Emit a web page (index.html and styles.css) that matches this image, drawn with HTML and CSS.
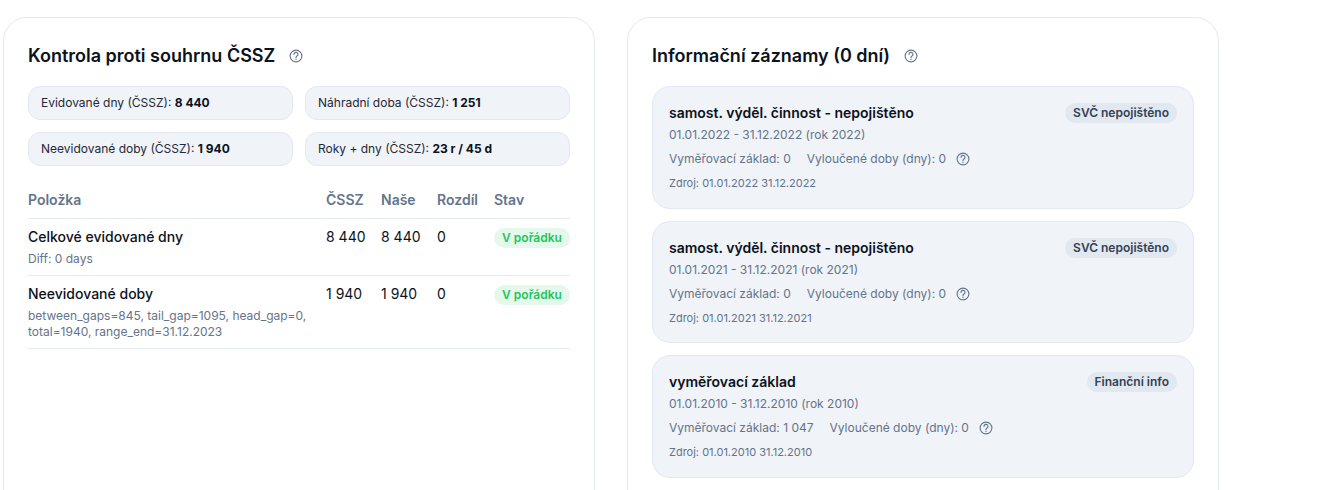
FILE: index.html
```html
<!DOCTYPE html>
<html lang="cs">
<head>
<meta charset="utf-8">
<title>Kontrola</title>
<link rel="stylesheet" href="styles.css">
</head>
<body>
<svg class="defs" width="0" height="0" aria-hidden="true"><symbol id="help" viewBox="0 0 14 14"><circle cx="7" cy="7" r="5.9" fill="none" stroke="currentColor" stroke-width="1.1"/><path d="M5 5.4a2 2 0 1 1 3 1.7c-.7.4-1 .7-1 1.4" fill="none" stroke="currentColor" stroke-width="1.1" stroke-linecap="round"/><circle cx="7" cy="10.3" r=".7" fill="currentColor"/></symbol></svg>
<main class="page">
  <section class="card">
    <h2 class="card-title">Kontrola proti souhrnu ČSSZ <svg class="help"><use href="#help"/></svg></h2>
    <div class="stats">
      <div class="stat">Evidované dny (ČSSZ): <b>8 440</b></div>
      <div class="stat">Náhradní doba (ČSSZ): <b>1 251</b></div>
      <div class="stat">Neevidované doby (ČSSZ): <b>1 940</b></div>
      <div class="stat">Roky + dny (ČSSZ): <b>23 r / 45 d</b></div>
    </div>
    <table class="table">
      <thead>
        <tr><th class="c1">Položka</th><th class="c2">ČSSZ</th><th class="c3">Naše</th><th class="c4">Rozdíl</th><th>Stav</th></tr>
      </thead>
      <tbody>
        <tr>
          <td><div class="item">Celkové evidované dny</div><div class="note">Diff: 0 days</div></td>
          <td>8 440</td><td>8 440</td><td>0</td><td><span class="ok">V pořádku</span></td>
        </tr>
        <tr>
          <td><div class="item">Neevidované doby</div><div class="note">between_gaps=845, tail_gap=1095, head_gap=0, total=1940, range_end=31.12.2023</div></td>
          <td>1 940</td><td>1 940</td><td>0</td><td><span class="ok">V pořádku</span></td>
        </tr>
      </tbody>
    </table>
  </section>
  <section class="card">
    <h2 class="card-title">Informační záznamy (0 dní) <svg class="help"><use href="#help"/></svg></h2>
    <div class="records">
      <article class="record">
        <div class="rec-head"><div class="rec-title">samost. výděl. činnost - nepojištěno</div><span class="tag">SVČ nepojištěno</span></div>
        <div class="rec-date">01.01.2022 - 31.12.2022 (rok 2022)</div>
        <div class="rec-meta"><span>Vyměřovací základ: 0</span><span>Vyloučené doby (dny): 0</span><svg class="help-sm"><use href="#help"/></svg></div>
        <div class="rec-src">Zdroj: 01.01.2022 31.12.2022</div>
      </article>
      <article class="record">
        <div class="rec-head"><div class="rec-title">samost. výděl. činnost - nepojištěno</div><span class="tag">SVČ nepojištěno</span></div>
        <div class="rec-date">01.01.2021 - 31.12.2021 (rok 2021)</div>
        <div class="rec-meta"><span>Vyměřovací základ: 0</span><span>Vyloučené doby (dny): 0</span><svg class="help-sm"><use href="#help"/></svg></div>
        <div class="rec-src">Zdroj: 01.01.2021 31.12.2021</div>
      </article>
      <article class="record">
        <div class="rec-head"><div class="rec-title">vyměřovací základ</div><span class="tag">Finanční info</span></div>
        <div class="rec-date">01.01.2010 - 31.12.2010 (rok 2010)</div>
        <div class="rec-meta"><span>Vyměřovací základ: 1 047</span><span>Vyloučené doby (dny): 0</span><svg class="help-sm"><use href="#help"/></svg></div>
        <div class="rec-src">Zdroj: 01.01.2010 31.12.2010</div>
      </article>
    </div>
  </section>
</main>
</body>
</html>
```

FILE: styles.css
```css
html, body { margin: 0; height: 490px; overflow: hidden; background: #fff; }
body { font-family: Inter, "Liberation Sans", sans-serif; color: #0b1220; }
.defs { position: absolute; }
.page { display: grid; grid-template-columns: 592px 592px; gap: 32px; padding: 17px 0 0 3px; align-items: start; height: 473px; overflow: hidden; }
.card { box-sizing: border-box; height: 520px; border: 1px solid #e4e8f1; border-radius: 24px; padding: 24px; background: #fff; }
.card-title { display: flex; align-items: center; gap: 9px; height: 28px; margin: 0 0 16px; font-size: 18px; line-height: 28px; font-weight: 600; color: #0b1220; white-space: pre; }
.help { width: 14px; height: 14px; color: #64748b; flex: none; }
.stats { display: grid; grid-template-columns: 1fr 1fr; gap: 12px; }
.stat { box-sizing: border-box; height: 34px; padding: 0 12px; line-height: 32px; font-size: 12px; color: #1f2937; background: #f0f3f8; border: 1px solid #e4e8f1; border-radius: 12px; }
.stat b { font-weight: 700; color: #0b1220; }
.table { width: 100%; margin-top: 16px; border-collapse: collapse; table-layout: fixed; font-size: 14px; }
.table th { box-sizing: border-box; height: 36px; padding: 0 0 1px; text-align: left; font-size: 14px; font-weight: 600; color: #64748b; border-bottom: 1px solid #e4e8f1; }
.c1 { width: 298px; }
.c2 { width: 55px; }
.c3 { width: 56px; }
.c4 { width: 57px; }
.table td { padding: 9px 0 8px; vertical-align: top; line-height: 18px; border-bottom: 1px solid #e4e8f1; }
.item { font-size: 14px; line-height: 18px; font-weight: 500; }
.note { margin-top: 5px; font-size: 12px; line-height: 16px; color: #64748b; padding-right: 10px; }
.ok { display: block; height: 20px; text-align: center; line-height: 19px; font-size: 12px; font-weight: 600; color: #22c55e; background: #e4f8ec; border-radius: 10px; }
.records { display: flex; flex-direction: column; gap: 12px; }
.record { box-sizing: border-box; height: 122.5px; padding: 16px; background: #f0f3f8; border: 1px solid #e4e8f1; border-radius: 18px; }
.rec-head { display: flex; justify-content: space-between; align-items: flex-start; height: 20px; }
.rec-title { font-size: 14px; line-height: 19px; font-weight: 600; color: #0b1220; }
.tag { height: 20px; line-height: 19px; padding: 0 8px; font-size: 12px; font-weight: 600; color: #334155; background: #e2e8f0; border-radius: 10px; }
.rec-date { margin-top: 3px; font-size: 12px; line-height: 18px; color: #64748b; }
.rec-meta { display: flex; align-items: center; gap: 16px; margin-top: 6px; font-size: 12px; line-height: 18px; color: #64748b; }
.help-sm { width: 14px; height: 14px; margin-left: -6px; color: #64748b; }
.rec-src { margin-top: 6px; font-size: 11px; line-height: 18px; color: #64748b; }
```
